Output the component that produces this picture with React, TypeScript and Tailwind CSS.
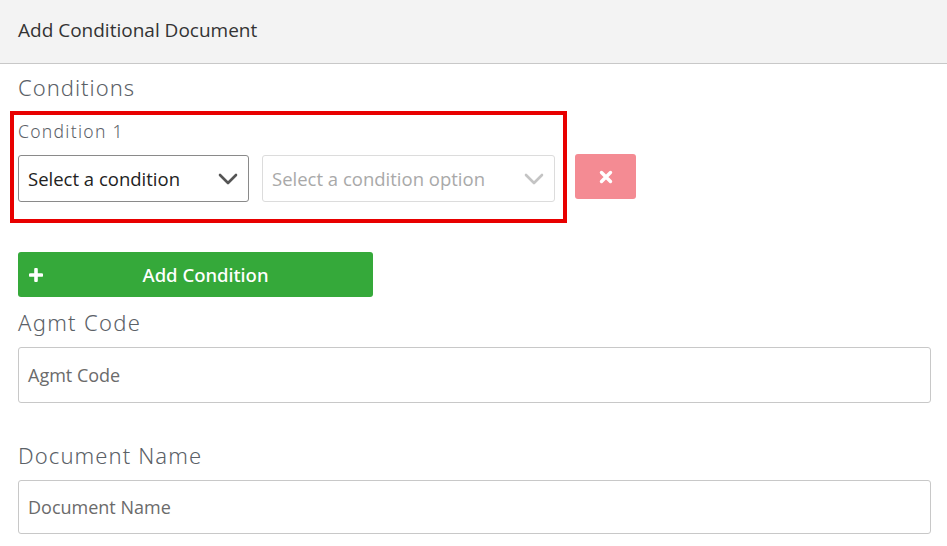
import React from "react";

const labelFont = { fontFamily: "'Noto Sans', 'Open Sans', sans-serif" };

function Chevron({ color }: { color: string }) {
  return (
    <svg width="20" height="12" viewBox="0 0 20 12" fill="none">
      <path d="M2 2 L10 10 L18 2" stroke={color} strokeWidth="2.6" strokeLinecap="round" strokeLinejoin="round" />
    </svg>
  );
}

export default function App() {
  return (
    <div className="w-[947px] h-[546px] bg-white overflow-hidden font-['Open_Sans',sans-serif]">
      {/* Header */}
      <div className="h-[64px] bg-[#f3f3f3] border-b border-[#c8c8c8] flex items-center px-[18px]">
        <span className="text-[19px] text-[#333] -mt-[3px]">Add Conditional Document</span>
      </div>

      <div className="pl-[18px] pr-[16px]">
        <div className="mt-[10px] text-[22px] leading-[26px] tracking-[1px] text-[#5b6167] font-light" style={labelFont}>
          Conditions
        </div>

        {/* Condition row */}
        <div className="flex items-start mt-[11px] -ml-[8px]">
          <div className="border-4 border-[#e80000] pl-[4px] pr-[8px] pt-[5px] pb-[17px] w-[557px]">
            <div className="text-[17.5px] leading-[22px] tracking-[1.3px] text-[#5b6167] font-light" style={labelFont}>
              Condition 1
            </div>
            <div className="flex gap-[13px] mt-[13px]">
              <div className="w-[231px] h-[47px] border border-[#8a8a8a] rounded-[3px] flex items-center justify-between pl-[9px] pr-[10px]">
                <span className="text-[18.5px] text-[#222]">Select a condition</span>
                <Chevron color="#555" />
              </div>
              <div className="w-[293px] h-[47px] border border-[#dcdcdc] rounded-[3px] flex items-center justify-between pl-[9px] pr-[10px]">
                <span className="text-[18.5px] text-[#a9a9a9]">Select a condition option</span>
                <Chevron color="#c4c4c4" />
              </div>
            </div>
          </div>
          <button className="ml-[8px] mt-[43px] w-[61px] h-[45px] rounded-[3px] bg-[#f48b93] flex items-center justify-center">
            <svg width="14" height="14" viewBox="0 0 14 14">
              <path d="M2.5 2.5 L11.5 11.5 M11.5 2.5 L2.5 11.5" stroke="#fff" strokeWidth="3.4" strokeLinecap="round" />
            </svg>
          </button>
        </div>

        {/* Add condition */}
        <button className="mt-[29px] w-[355px] h-[45px] rounded-[3px] bg-[#35a93a] flex items-center relative pl-[20px]">
          <svg className="absolute left-[11px]" width="14" height="14" viewBox="0 0 14 14">
            <path d="M7 1.5 V12.5 M1.5 7 H12.5" stroke="#fff" strokeWidth="3.6" strokeLinecap="round" />
          </svg>
          <span className="flex-1 text-center text-[18.5px] font-medium text-white" style={labelFont}>
            Add Condition
          </span>
        </button>

        <div className="mt-[12px] text-[22px] leading-[26px] tracking-[1.3px] text-[#5b6167] font-light" style={labelFont}>
          Agmt Code
        </div>
        <div className="mt-[12px] h-[56px] border border-[#c8c8c8] rounded-[3px] flex items-center pl-[9px]">
          <span className="text-[18px] text-[#6b6b6b]">Agmt Code</span>
        </div>

        <div className="mt-[39px] text-[22px] leading-[26px] tracking-[1.1px] text-[#5b6167] font-light" style={labelFont}>
          Document Name
        </div>
        <div className="mt-[12px] h-[54px] border border-[#c8c8c8] rounded-[3px] flex items-center pl-[9px]">
          <span className="text-[18px] text-[#6b6b6b]">Document Name</span>
        </div>
      </div>
    </div>
  );
}
